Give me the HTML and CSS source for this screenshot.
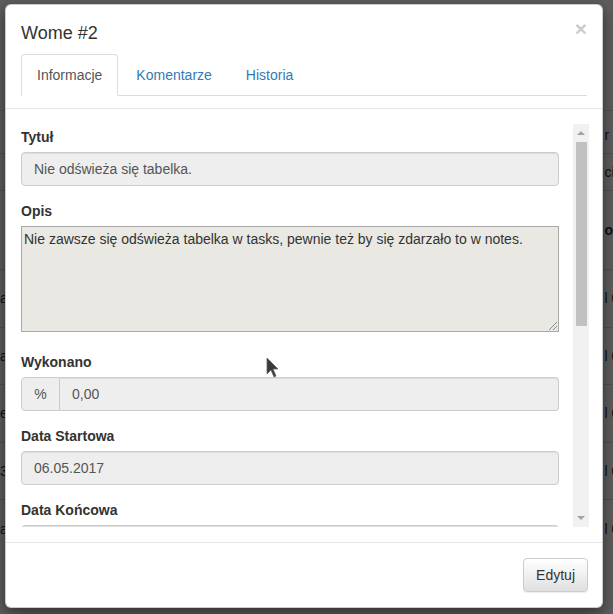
FILE: index.html
```html
<!DOCTYPE html>
<html lang="pl">
<head>
<meta charset="utf-8">
<title>Wome #2</title>
<link rel="stylesheet" href="styles.css">
</head>
<body>
<div class="page">
  <table class="bg-table">
    <tr class="r-top"><td></td><td></td><td></td><td></td><td></td><td></td><td></td><td>r z</td></tr>
    <tr class="r-top2"><td></td><td></td><td></td><td></td><td></td><td></td><td></td><td>cie</td></tr>
    <tr class="r-head"><th></th><th></th><th></th><th></th><th></th><th></th><th></th><th>on</th></tr>
    <tr><td>a</td><td></td><td></td><td></td><td></td><td></td><td></td><td>l 0</td></tr>
    <tr><td>a</td><td></td><td></td><td></td><td></td><td></td><td></td><td>l 0</td></tr>
    <tr><td>e</td><td></td><td></td><td></td><td></td><td></td><td></td><td>l 0</td></tr>
    <tr><td>3</td><td></td><td></td><td></td><td></td><td></td><td></td><td>l 0</td></tr>
    <tr><td>a</td><td></td><td></td><td></td><td></td><td></td><td></td><td>l 0</td></tr>
  </table>
</div>
<div class="backdrop"></div>

<div class="modal">
  <div class="modal-header">
    <div class="title-row">
      <h4 class="modal-title">Wome #2</h4>
      <span class="close">&times;</span>
    </div>
    <ul class="nav-tabs">
      <li class="tab active"><a>Informacje</a></li>
      <li class="tab"><a>Komentarze</a></li>
      <li class="tab"><a>Historia</a></li>
    </ul>
  </div>
  <div class="modal-body">
    <div class="scroll">
      <div class="scroll-content">
        <div class="form-group">
          <label class="lbl">Tytuł</label>
          <div class="field">Nie odświeża się tabelka.</div>
        </div>
        <div class="form-group">
          <label class="lbl">Opis</label>
          <div class="area">Nie zawsze się odświeża tabelka w tasks, pewnie też by się zdarzało to w notes.<span class="grip"></span></div>
        </div>
        <div class="form-group">
          <label class="lbl">Wykonano</label>
          <div class="input-group">
            <span class="addon">%</span>
            <div class="field grp">0,00</div>
          </div>
        </div>
        <div class="form-group">
          <label class="lbl">Data Startowa</label>
          <div class="field">06.05.2017</div>
        </div>
        <div class="form-group">
          <label class="lbl">Data Końcowa</label>
          <div class="field"></div>
        </div>
      </div>
      <div class="scrollbar">
        <div class="sb-btn"><span class="arrow-up"></span></div>
        <div class="sb-thumb"></div>
        <div class="sb-space"></div>
        <div class="sb-btn down"><span class="arrow-down"></span></div>
      </div>
    </div>
  </div>
  <div class="modal-footer">
    <button class="btn">Edytuj</button>
  </div>
</div>

<svg class="cursor" width="14" height="22" viewBox="0 0 14 22"><path d="M1 1 L1 17 L5 13 L8 20 L10 19 L7 12 L12 12 Z" fill="#3a3a3a" stroke="#666" stroke-width="0.8"/></svg>
</body>
</html>
```

FILE: styles.css
```css
* { box-sizing: border-box; }
html, body { margin: 0; padding: 0; }
body {
  width: 613px;
  height: 614px;
  overflow: hidden;
  position: relative;
  font-family: "Liberation Sans", Arial, sans-serif;
  font-size: 14px;
  line-height: 20px;
  color: #333;
  background: #fff;
}

/* background page */
.page { padding-top: 110px; height: 614px; overflow: hidden; }
.bg-table {
  border-collapse: collapse;
  table-layout: fixed;
  width: 613px;
  color: #333;
}
.bg-table td, .bg-table th {
  border-top: 1px solid #ddd;
  border-left: 1px solid #ddd;
  height: 57.5px;
  padding: 8px 0;
  white-space: nowrap;
  overflow: hidden;
  font-weight: normal;
}
.bg-table td:first-child, .bg-table th:first-child { text-align: right; width: 8px; border-left: 0; }
.bg-table td:last-child, .bg-table th:last-child { text-align: left; padding-left: 23px; width: 32px; }
.bg-table .r-top td { height: 43px; vertical-align: bottom; }
.bg-table .r-top2 td { height: 30px; vertical-align: top; }
.bg-table .r-head th { height: 79px; font-weight: bold; }

.backdrop {
  position: absolute;
  inset: 0;
  background: rgba(0, 0, 0, 0.63);
}

/* modal */
.modal {
  position: absolute;
  left: 5px;
  top: 4px;
  width: 598px;
  background: #fff;
  border: 1px solid rgba(0, 0, 0, 0.2);
  border-radius: 6px;
  box-shadow: 0 5px 15px rgba(0, 0, 0, 0.5);
}
.modal-header {
  padding: 15px 15px 12px;
  border-bottom: 1px solid #e5e5e5;
}
.title-row {
  display: flex;
  justify-content: space-between;
  align-items: flex-start;
}
.modal-title {
  margin: 0;
  font-size: 18px;
  font-weight: normal;
  line-height: 26px;
  color: #333;
}
.close {
  font-size: 21px;
  font-weight: bold;
  line-height: 20px;
  color: #000;
  opacity: 0.2;
  margin-top: -1px;
}
.nav-tabs {
  list-style: none;
  margin: 8px 0 0;
  padding: 0;
  display: flex;
  border-bottom: 1px solid #ddd;
}
.tab { margin-bottom: -1px; margin-right: 2px; }
.tab a {
  display: block;
  padding: 10px 15px;
  line-height: 20px;
  border: 1px solid transparent;
  border-radius: 4px 4px 0 0;
  color: #337ab7;
}
.tab.active a {
  color: #555;
  background: #fff;
  border-color: #ddd #ddd transparent;
}

.modal-body { padding: 15px; }
.scroll {
  display: flex;
  height: 403px;
}
.scroll-content {
  flex: 1;
  overflow: hidden;
  padding: 3px 14px 0 0;
}
.scrollbar {
  width: 16px;
  margin-right: -2px;
  background: #f1f1f1;
  display: flex;
  flex-direction: column;
}
.sb-btn {
  height: 17px;
  display: flex;
  justify-content: center;
  align-items: center;
  padding-top: 1px;
}
.sb-btn.down { padding-top: 0; padding-bottom: 1px; }
.arrow-up {
  width: 0;
  height: 0;
  border-left: 4px solid transparent;
  border-right: 4px solid transparent;
  border-bottom: 4px solid #a3a3a3;
}
.arrow-down {
  width: 0;
  height: 0;
  border-left: 4px solid transparent;
  border-right: 4px solid transparent;
  border-top: 4px solid #a3a3a3;
}
.sb-thumb {
  height: 184px;
  margin: 1px 2px 0 3px;
  background: #c1c1c1;
}
.sb-space { flex: 1; }

.form-group {
  display: flex;
  flex-direction: column;
  margin-bottom: 15px;
}
.lbl {
  display: block;
  font-weight: bold;
  margin-bottom: 5px;
  color: #333;
}
.field {
  height: 34px;
  padding: 6px 12px;
  background: #eee;
  border: 1px solid #ccc;
  border-radius: 4px;
  color: #555;
  box-shadow: inset 0 1px 1px rgba(0, 0, 0, 0.075);
}
.area {
  position: relative;
  height: 106px;
  padding: 2px 2px;
  background: #e9e8e2;
  border: 1px solid #a9a9a9;
  color: #333;
  margin-bottom: 5px;
}
.grip {
  position: absolute;
  right: 1px;
  bottom: 1px;
  width: 8px;
  height: 8px;
  background: linear-gradient(135deg, transparent 45%, #888 45%, #888 52%, transparent 52%, transparent 72%, #888 72%, #888 79%, transparent 79%);
}
.input-group { display: flex; }
.addon {
  width: 39px;
  height: 34px;
  padding: 6px 0;
  text-align: center;
  background: #eee;
  border: 1px solid #ccc;
  border-radius: 4px 0 0 4px;
  color: #555;
}
.field.grp {
  flex: 1;
  border-left: 0;
  border-radius: 0 4px 4px 0;
}

.modal-footer {
  padding: 15px;
  border-top: 1px solid #e5e5e5;
  display: flex;
  justify-content: flex-end;
}
.btn {
  font-family: "Liberation Sans", Arial, sans-serif;
  font-size: 14px;
  line-height: 20px;
  height: 34px;
  padding: 6px 12px;
  color: #333;
  border: 1px solid #ccc;
  border-radius: 4px;
  background: linear-gradient(to bottom, #fff 0, #e0e0e0 100%);
  box-shadow: inset 0 1px 0 rgba(255, 255, 255, 0.15), 0 1px 1px rgba(0, 0, 0, 0.075);
  margin-right: -1px;
}

.cursor {
  position: absolute;
  left: 266px;
  top: 357px;
}
```
